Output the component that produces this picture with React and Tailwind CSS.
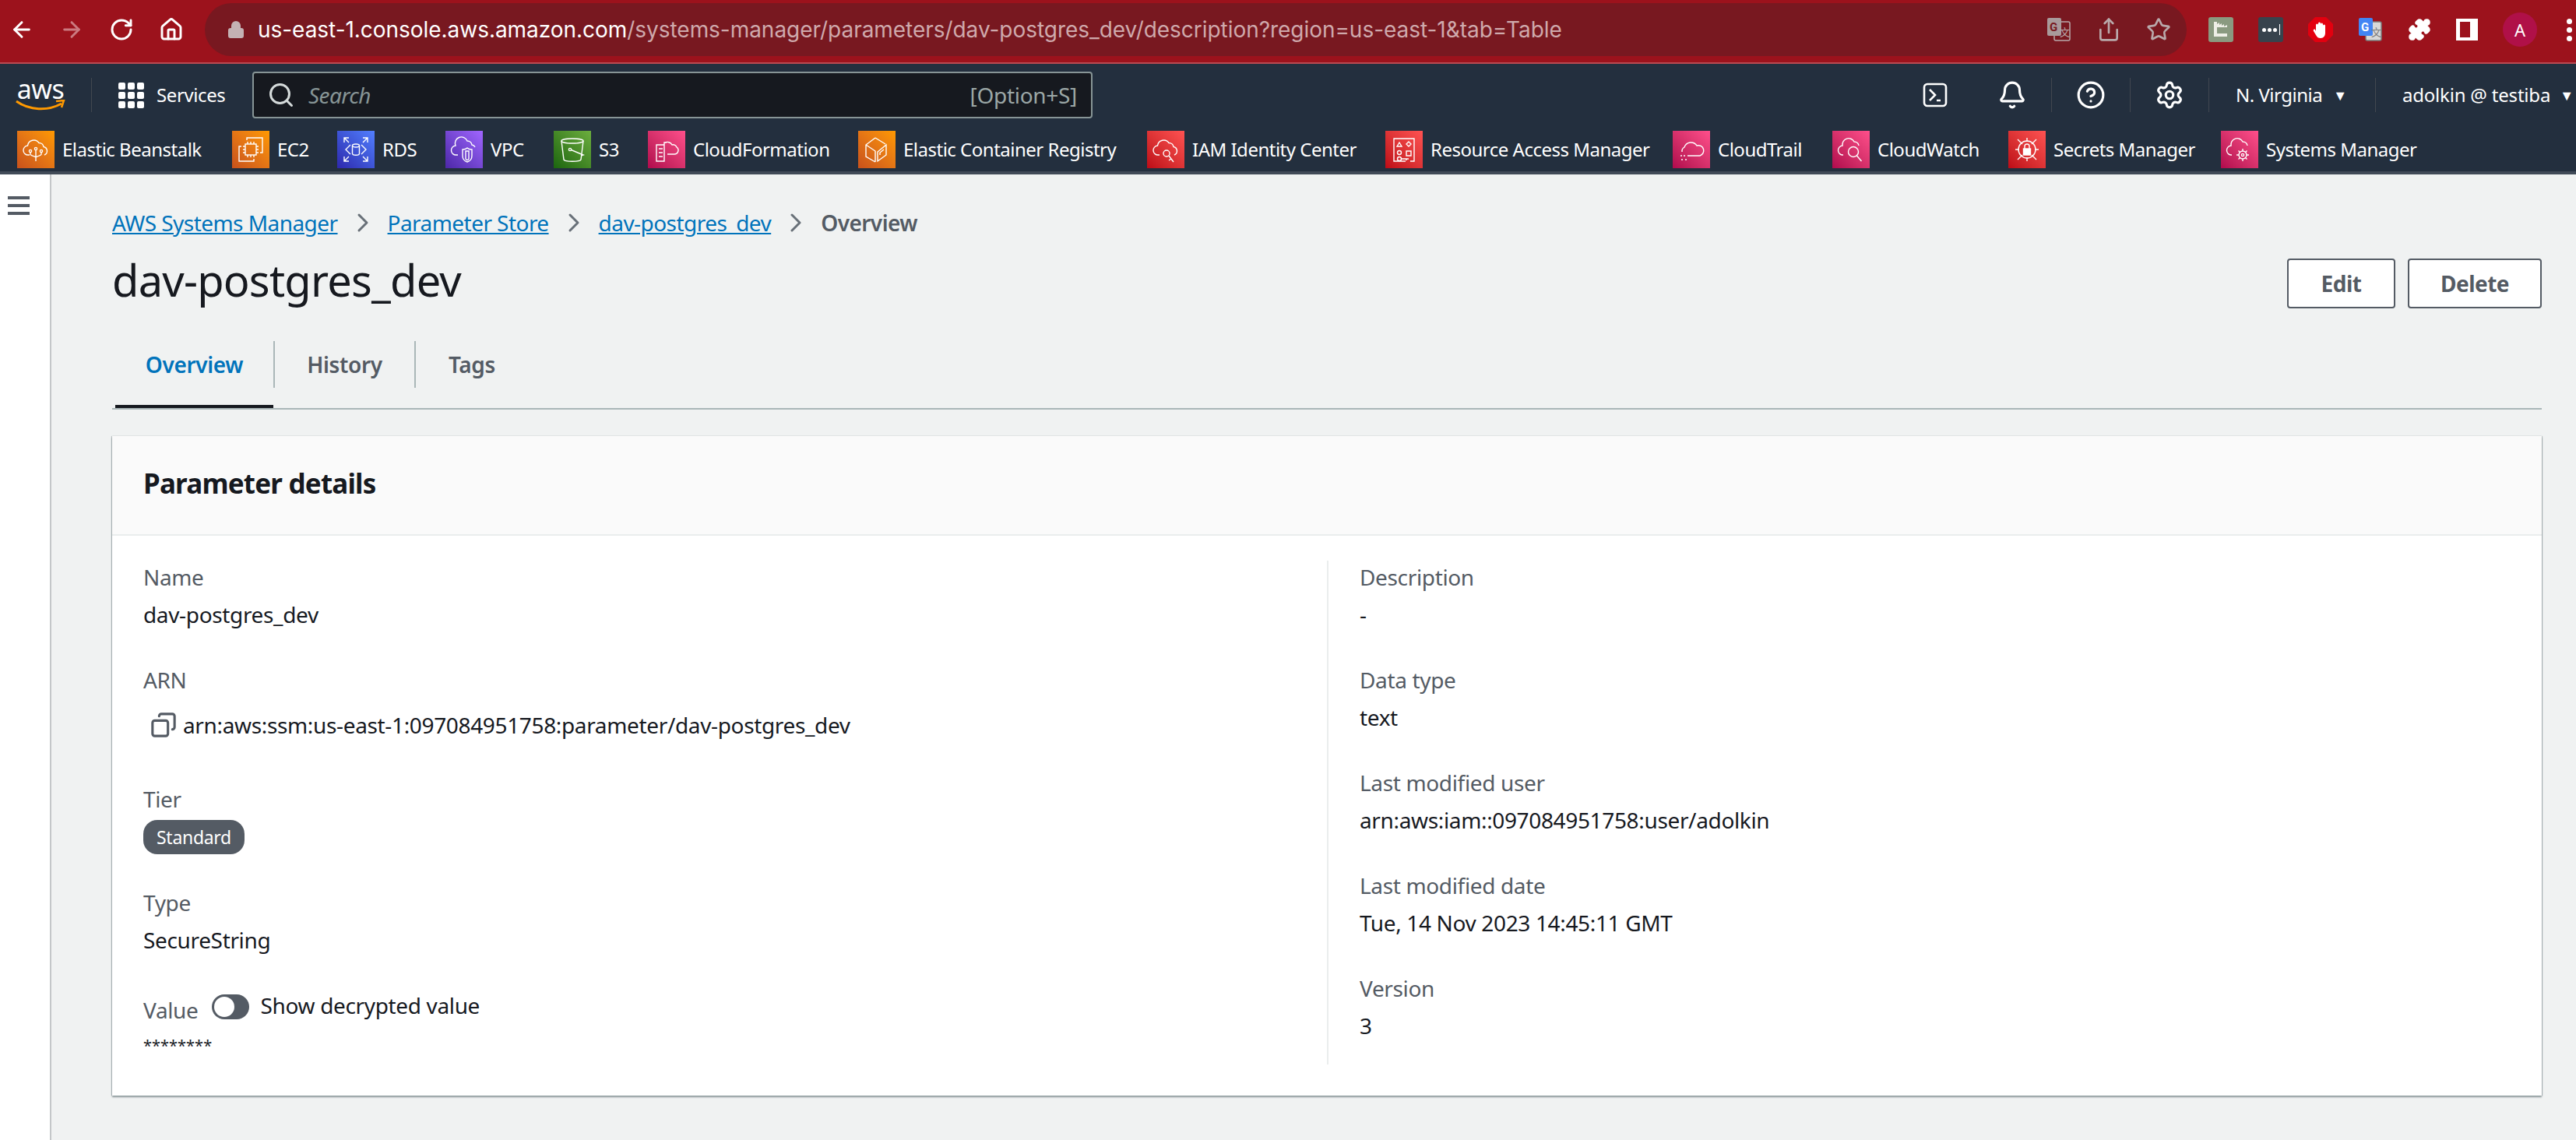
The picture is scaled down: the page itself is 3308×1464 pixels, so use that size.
import React from 'react';
import {
  ArrowLeft, ArrowRight, RotateCw, Home, Lock, Search, Share, Star, Puzzle, CircleHelp, Settings, Bell, ChevronRight, Copy,
} from 'lucide-react';

const FONT = 'font-["Noto_Sans",sans-serif]';

// icon tile in the favorites bar, gradient + small white stroke drawing
const Tile = ({ grad, children }) => (
  <span className={`w-[48px] h-[48px] shrink-0 flex items-center justify-center bg-gradient-to-tr ${grad}`}>
    <svg width="36" height="36" viewBox="0 0 36 36" fill="none" stroke="white" strokeWidth="1.4">{children}</svg>
  </span>
);

const cloud = <path d="M10 25H8.5a6 6 0 0 1-1-12A8 8 0 0 1 22 9.500a6 6 0 0 1 6 5 5.500 5.500 0 0 1 1 10.500" />;

const ORANGE = 'from-[#c8511b] to-[#ff9900]';
const RED = 'from-[#bd0816] to-[#ff5252]';
const PINK = 'from-[#b0084d] to-[#ff4f8b]';

const favorites = [
  { label: 'Elastic Beanstalk', grad: ORANGE, w: 'w-[276px]', icon: <>{cloud}<path d="M18 33V19M11 22v2c0 2 7 3 7 4M25 22v2c0 2-7 3-7 4" /><circle cx="11" cy="20" r="1.6" /><circle cx="18" cy="17" r="1.6" /><circle cx="25" cy="20" r="1.6" /></> },
  { label: 'EC2', grad: ORANGE, w: 'w-[135px]', icon: <><rect x="11" y="11" width="14" height="14" /><path d="M14 8v3M18 8v3M22 8v3M14 25v3M18 25v3M22 25v3M8 14h3M8 18h3M8 22h3M25 14h3M25 18h3M25 22h3M13 6V3h20v19h-3M6 14H3v19h19v-3" /></> },
  { label: 'RDS', grad: 'from-[#2e27ad] to-[#527fff]', w: 'w-[139px]', icon: <><ellipse cx="18" cy="13" rx="4.500" ry="2" /><path d="M13.500 13v10c0 3 9 3 9 0V13M11 12l-6 6 6 6M25 12l6 6-6 6M3 9V3h6M3 3l6 6M33 9V3h-6M33 3l-6 6M3 27v6h6M3 33l6-6M33 27v6h-6M33 33l-6-6" /></> },
  { label: 'VPC', grad: 'from-[#4d27a8] to-[#a166ff]', w: 'w-[139px]', icon: <><path d="M10 25H8a6 6 0 0 1-1-12A8 8 0 0 1 22 7a6 6 0 0 1 6 5 5 5 0 0 1 4 3" /><path d="M16 18c3 0 5-1 6-2 1 1 3 2 6 2v8c0 4-3 7-6 8-3-1-6-4-6-8Z" /><path d="M20 20h4v10c-1 2-3 2-4 0Z" /></> },
  { label: 'S3', grad: 'from-[#1b660f] to-[#6cae3e]', w: 'w-[121px]', icon: <><ellipse cx="18" cy="7" rx="14" ry="3" /><path d="M4 7l3 24c1 3 21 3 22 0l3-24" /><circle cx="15" cy="18" r="1.600" /><path d="M16.500 18.500L32 25l-3 1" /></> },
  { label: 'CloudFormation', grad: PINK, w: 'w-[270px]', icon: <><path d="M5 12h10v21H5ZM8 17h5M8 22h5M8 27h5M15 12v-3h3M19 24h9a5 5 0 0 0 3-9 5 5 0 0 0-6-3 7 7 0 0 0-9-3" /></> },
  { label: 'Elastic Container Registry', grad: ORANGE, w: 'w-[371px]', icon: <><path d="M16 3L4 12v15l12 7M16 3l13 8M4 12l12 8v14M19 33V21l11-9v13l-11 8Z" /><path d="M22 25v-3l5-4" /></> },
  { label: 'IAM Identity Center', grad: RED, w: 'w-[306px]', icon: <>{cloud}<circle cx="19" cy="23" r="4" /><path d="M22 26l6 8M25 30l-3 2" /></> },
  { label: 'Resource Access Manager', grad: RED, w: 'w-[369px]', icon: <><path d="M20 33H5V4h26v29h-5M12 9l-3 5h6ZM24 8l3 3-3 3-3-3ZM21 20h6v6h-6Z" /><circle cx="12" cy="22" r="2.500" /><circle cx="12" cy="30" r="2.500" /><path d="M15 30h9M21 30v2" /></> },
  { label: 'CloudTrail', grad: PINK, w: 'w-[205px]', icon: <><path d="M6 21a6 6 0 0 1 3-6A9 9 0 0 1 25 13a6 6 0 0 1 4 13H13M4 26h2M8 26h2M5 31h2M10 31h2" /></> },
  { label: 'CloudWatch', grad: PINK, w: 'w-[226px]', icon: <><path d="M8 25a6 6 0 0 1-1-12A8 8 0 0 1 22 8a6 6 0 0 1 6 5" /><circle cx="21" cy="21" r="6.500" /><path d="M25.500 26l6 7" /></> },
  { label: 'Secrets Manager', grad: RED, w: 'w-[273px]', icon: <><circle cx="18" cy="18" r="11" /><path d="M18 3v5M18 28v5M3 18h5M28 18h5M6 5l6 6M30 5l-6 6M6 31l6-6M30 31l-6-6" /><rect x="13.500" y="17" width="9" height="8" fill="white" /><path d="M15 17v-3a3 3 0 0 1 6 0v3" /></> },
  { label: 'Systems Manager', grad: PINK, w: '', icon: <><path d="M8 25a6 6 0 0 1-1-12A8 8 0 0 1 22 8a6 6 0 0 1 6 5" /><circle cx="22" cy="25" r="5" /><circle cx="22" cy="25" r="1.600" /><path d="M22 17v3M22 30v3M14 25h3M27 25h3M16.500 19.500l2 2M25.500 28.500l2 2M27.500 19.500l-2 2M18.500 28.500l-2 2" /></> },
];

const Divider = () => <span className="w-px h-[44px] bg-[#414750]" />;

const labelCls = 'text-[28px] leading-[48px] text-[#545b64] tracking-[-0.35px]';
const valueCls = 'text-[28px] leading-[48px] text-[#16191f] tracking-[-0.35px]';

const Field = ({ label, children, mb = 'mb-[36px]' }) => (
  <div className={mb}>
    <div className={labelCls}>{label}</div>
    <div className={valueCls}>{children}</div>
  </div>
);

const Translate = ({ left, right, fg, other }) => (
  <svg width="32" height="32" viewBox="0 0 32 32" className="shrink-0">
    <rect x="10" y="6" width="20" height="24" rx="2" fill={right} stroke={fg} strokeWidth="1.500" />
    <rect x="1" y="1" width="18" height="23" rx="2" fill={left} />
    <text x="4" y="18" fontSize="15" fontWeight="700" fill={other} fontFamily="Roboto, sans-serif">G</text>
    <text x="17" y="24" fontSize="13" fill={fg} fontFamily="'Noto Sans CJK SC', sans-serif">文</text>
  </svg>
);

const App = () => (
  <div className={`w-[3308px] h-[1464px] overflow-hidden bg-[#f0f2f2] flex flex-col ${FONT}`}>
    {/* browser chrome */}
    <div className="h-[82px] shrink-0 bg-[#9c121c] border-b-2 border-[#b84a52] flex items-center pb-[4px]">
      <div className="w-[263px] shrink-0 flex items-center text-white pl-[12px] gap-[32px]">
        <ArrowLeft size={32} strokeWidth={2.2} />
        <ArrowRight size={32} strokeWidth={2.2} className="text-[#cb7a80]" />
        <RotateCw size={32} strokeWidth={2.2} />
        <Home size={32} strokeWidth={2.2} />
      </div>
      <div className="w-[2545px] h-[68px] shrink-0 rounded-full bg-[#781820] flex items-center pl-[28px] pr-[20px]">
        <Lock size={24} className="text-[#c4b2b4] mr-[16px]" fill="#c4b2b4" />
        <span className='text-[28px] tracking-[-0.04px] font-["Inter",sans-serif] text-white whitespace-nowrap'>us-east-1.console.aws.amazon.com<span className="text-[#cfa9ac]">/systems-manager/parameters/dav-postgres_dev/description?region=us-east-1&amp;tab=Table</span></span>
        <div className="ml-auto flex items-center gap-[32px] text-[#b9a9ab]">
          <Translate left="#a99a9b" right="#781820" fg="#b9a9ab" other="#781820" />
          <Share size={32} strokeWidth={2} />
          <Star size={32} strokeWidth={2} />
        </div>
      </div>
      <div className="flex-1 flex items-center pl-[28px] gap-[32px]">
        <svg width="32" height="32" viewBox="0 0 32 32" className="shrink-0">
          <rect width="32" height="32" rx="3" fill="#8a9a80" />
          <path d="M7 6h4v3l3-2v3l3-2v3l3-2v3l4-2v3H11v8h13v4H7Z" fill="#eeeee6" />
        </svg>
        <span className="w-[32px] h-[32px] shrink-0 bg-[#37434d] rounded-[3px] text-white flex items-center justify-center gap-[2px]">
          <span className="w-[5px] h-[5px] rounded-full bg-white" />
          <span className="w-[5px] h-[5px] rounded-full bg-white" />
          <span className="w-[5px] h-[5px] rounded-full bg-white" />
          <span className="w-px h-[14px] bg-white ml-[1px]" />
        </span>
        <svg width="32" height="32" viewBox="0 0 32 32" className="shrink-0">
          <polygon points="9,0 23,0 32,9 32,23 23,32 9,32 0,23 0,9" fill="#e3000f" />
          <path d="M10 18V10a1.500 1.500 0 0 1 3 0V8a1.500 1.500 0 0 1 3 0v1a1.500 1.500 0 0 1 3 0v2a1.500 1.500 0 0 1 3 0v9c0 4-2 7-6 7-3 0-4-1-6-4l-3-5c-1-2 1-3 2-2Z" fill="white" />
        </svg>
        <Translate left="#4285f4" right="#d8d8d8" fg="#7b7b7b" other="white" />
        <Puzzle size={30} className="text-white shrink-0" fill="white" />
        <span className="w-[28px] h-[28px] shrink-0 border-[4px] border-l-[5px] border-r-[10px] border-white" />
        <span className="w-[44px] h-[44px] shrink-0 rounded-full bg-[#b01048] text-white text-[22px] flex items-center justify-center">A</span>
        <span className="ml-[6px] flex flex-col gap-[4px] shrink-0">
          <span className="w-[7px] h-[7px] rounded-full bg-white" />
          <span className="w-[7px] h-[7px] rounded-full bg-white" />
          <span className="w-[7px] h-[7px] rounded-full bg-white" />
        </span>
      </div>
    </div>

    {/* aws nav */}
    <div className="shrink-0 h-[142px] bg-[#232f3e] border-b-[4px] border-[#414b58] text-white flex flex-col">
      <div className="h-[76px] shrink-0 flex items-center pt-[4px]">
        <div className="w-[64px] ml-[20px] flex flex-col items-center">
          <span className='text-[34px] leading-[26px] font-["Noto_Sans",sans-serif] tracking-[-0.5px]'>aws</span>
          <svg width="64" height="15" viewBox="0 0 64 15" fill="none" className="mt-[1px]">
            <path d="M1 2c17 12 40 13 58 3" stroke="#ff9900" strokeWidth="3" />
            <path d="M52 2l10-1-3 9" stroke="#ff9900" strokeWidth="2.500" />
          </svg>
        </div>
        <span className="w-px h-[44px] bg-[#414750] ml-[33px]" />
        <div className="ml-[34px] grid grid-cols-3 gap-[3px]">
          {Array.from({ length: 9 }).map((_, i) => <span key={i} className="w-[9px] h-[9px] rounded-[2px] bg-white" />)}
        </div>
        <span className="ml-[16px] text-[24px] tracking-[-0.4px] w-[90px]">Services</span>
        <div className="ml-[33px] w-[1079px] h-[60px] bg-[#16191f] border-2 border-[#879596] rounded-[4px] flex items-center pl-[17px] pr-[18px] text-[#9ba7a6]">
          <Search size={36} className="text-[#d5dbdb]" strokeWidth={2} />
          <span className="ml-[17px] text-[28px] italic tracking-[-0.6px] text-[#879596]">Search</span>
          <span className="ml-auto text-[28px] tracking-[-0.3px]">[Option+S]</span>
        </div>
        <div className="ml-auto flex items-center h-[44px] pr-[3px]">
          <svg width="32" height="32" viewBox="0 0 32 32" fill="none" stroke="white" strokeWidth="2.6"><rect x="2" y="2" width="28" height="28" rx="4" /><path d="M9 9l7 7-7 7M18 23h5" /></svg>
          <span className="ml-[33px]"><Divider /></span>
          <Bell size={38} strokeWidth={2} className="mx-[31px]" />
          <Divider />
          <CircleHelp size={38} strokeWidth={2} className="mx-[31px]" />
          <Divider />
          <Settings size={38} strokeWidth={2} className="mx-[31px]" />
          <Divider />
          <span className="ml-[34px] text-[24px] tracking-[-0.5px]">N. Virginia</span>
          <span className="ml-[14px] mr-[36px] text-[18px]">▼</span>
          <Divider />
          <span className="ml-[34px] text-[24px] tracking-[-0.2px] whitespace-nowrap">adolkin @ testiba</span>
          <span className="ml-[12px] text-[18px]">▼</span>
        </div>
      </div>
      <div className="flex items-center pl-[22px] h-[48px] mt-[10px]">
        {favorites.map((f) => (
          <span key={f.label} className={`flex items-center shrink-0 ${f.w}`}>
            <Tile grad={f.grad}>{f.icon}</Tile>
            <span className="ml-[10px] text-[24px] tracking-[-0.5px] whitespace-nowrap">{f.label}</span>
          </span>
        ))}
      </div>
    </div>

    <div className="flex-1 flex min-h-0">
      {/* collapsed side nav */}
      <div className="w-[66px] shrink-0 bg-white border-r-2 border-[#c4c7c9] pt-[28px] pl-[10px]">
        <div className="w-[28px] flex flex-col gap-[6px]">
          <span className="h-[4px] bg-[#545b64]" />
          <span className="h-[4px] bg-[#545b64]" />
          <span className="h-[4px] bg-[#545b64]" />
        </div>
      </div>

      <div className="flex-1 min-w-0 pl-[78px] pr-[44px]">
        {/* breadcrumbs */}
        <div className="flex items-center h-[40px] mt-[42px] text-[28px] tracking-[-0.55px] text-[#0073bb]">
          <span className="underline">AWS Systems Manager</span>
          <ChevronRight size={40} strokeWidth={1.8} className="text-[#687078] mx-[12px]" />
          <span className="underline">Parameter Store</span>
          <ChevronRight size={40} strokeWidth={1.8} className="text-[#687078] mx-[12px]" />
          <span className="underline">dav-postgres_dev</span>
          <ChevronRight size={40} strokeWidth={1.8} className="text-[#687078] mx-[12px]" />
          <span className="text-[#545b64] font-semibold">Overview</span>
        </div>

        {/* title and actions */}
        <div className="flex items-center justify-between mt-[26px] h-[64px]">
          <h1 className="text-[56px] leading-[64px] pb-[10px] tracking-[-0.8px] text-[#16191f]">dav-postgres_dev</h1>
          <div className="flex gap-[16px]">
            <button className="w-[139px] h-[64px] bg-white border-2 border-[#545b64] rounded-[4px] text-[28px] font-bold text-[#545b64] tracking-[-0.5px]">Edit</button>
            <button className="w-[172px] h-[64px] bg-white border-2 border-[#545b64] rounded-[4px] text-[28px] font-bold text-[#545b64] tracking-[-0.5px]">Delete</button>
          </div>
        </div>

        {/* tabs */}
        <div className="mt-[30px] h-[100px] border-b-2 border-[#aab7b8] flex items-start relative pl-[4px]">
          <div className="w-[205px] h-[60px] mt-[12px] flex items-center justify-center border-r-2 border-[#aab7b8] text-[28px] font-semibold tracking-[-0.35px] text-[#0073bb]">Overview</div>
          <div className="w-[181px] h-[60px] mt-[12px] flex items-center justify-center border-r-2 border-[#aab7b8] text-[28px] font-semibold tracking-[-0.35px] text-[#545b64]">History</div>
          <div className="w-[102px] h-[60px] mt-[12px] flex items-center justify-end text-[28px] font-semibold tracking-[-0.35px] text-[#545b64]">Tags</div>
          <span className="absolute left-[4px] bottom-0 w-[203px] h-[4px] bg-[#16191f]" />
        </div>

        {/* card */}
        <div className="mt-[34px] h-[847px] bg-white shadow-[0_2px_2px_rgba(0,28,36,0.4),1px_0_1px_rgba(0,28,36,0.2),-1px_0_1px_rgba(0,28,36,0.2)]">
          <div className="h-[128px] bg-[#fafafa] border-b-2 border-[#eaeded] flex items-center pl-[40px] pb-[3px]">
            <h2 className="text-[35px] font-bold tracking-[-0.8px] text-[#16191f]">Parameter details</h2>
          </div>
          <div className="grid grid-cols-2 pt-[32px]">
            <div className="pl-[40px] -mt-[3px]">
              <Field label="Name">dav-postgres_dev</Field>
              <div className="mb-[47px]">
                <div className={labelCls}>ARN</div>
                <div className={`mt-[10px] pl-[9px] flex items-center gap-[8px] ${valueCls}`}>
                  <Copy size={34} strokeWidth={2.2} className="text-[#545b64] -scale-x-100" />
                  arn:aws:ssm:us-east-1:097084951758:parameter/dav-postgres_dev
                </div>
              </div>
              <div className="mb-[38px]">
                <div className={labelCls}>Tier</div>
                <span className="mt-[3px] flex w-[130px] h-[44px] items-center justify-center rounded-[18px] bg-[#545b64] text-white text-[23px] tracking-[-0.3px]">Standard</span>
              </div>
              <Field label="Type" mb="mb-[34px]">SecureString</Field>
              <div className="flex items-start">
                <span className={`mt-[8px] ${labelCls}`}>Value</span>
                <span className="ml-[17px] mt-[12px] w-[48px] h-[32px] rounded-full bg-[#545b64] p-[3px] flex"><span className="w-[26px] h-[26px] rounded-full bg-white" /></span>
                <span className={`ml-[15px] mt-[2px] ${valueCls}`}>Show decrypted value</span>
              </div>
              <div className="mt-[4px] text-[20px] leading-[36px] text-[#16191f]">********</div>
            </div>
            <div className="border-l-2 border-[#eaeded] pl-[40px] h-[647px]">
              <div className="-mt-[3px]">
                <Field label="Description">-</Field>
                <Field label="Data type">text</Field>
                <Field label="Last modified user">arn:aws:iam::097084951758:user/adolkin</Field>
                <Field label="Last modified date">Tue, 14 Nov 2023 14:45:11 GMT</Field>
                <Field label="Version" mb="mb-0">3</Field>
              </div>
            </div>
          </div>
        </div>
      </div>
    </div>
  </div>
);

export default App;
